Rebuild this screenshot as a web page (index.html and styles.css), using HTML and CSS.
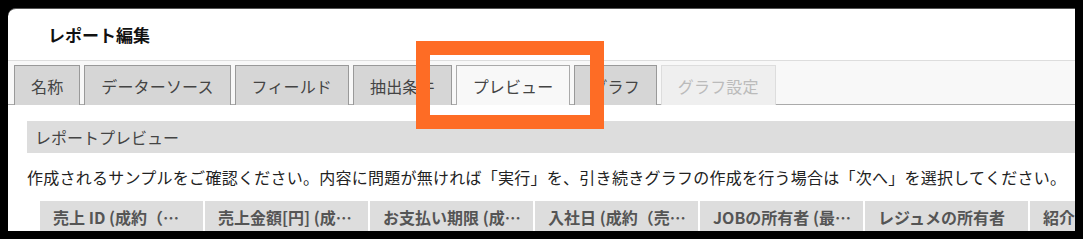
FILE: index.html
```html
<!DOCTYPE html>
<html lang="ja">
<head>
    <meta charset="UTF-8">
    <title>レポート編集</title>
    <link rel="stylesheet" href="styles.css">
</head>
<body>
    <div class="panel">
        <div class="panel-title">レポート編集</div>
        <div class="tab-strip">
            <div class="tab">名称</div>
            <div class="tab">データーソース</div>
            <div class="tab">フィールド</div>
            <div class="tab">抽出条件</div>
            <div class="tab active">プレビュー</div>
            <div class="tab">グラフ</div>
            <div class="tab disabled">グラフ設定</div>
        </div>
        <div class="panel-body">
            <div class="section-head">レポートプレビュー</div>
            <p class="note">作成されるサンプルをご確認ください。内容に問題が無ければ「実行」を、引き続きグラフの作成を行う場合は「次へ」を選択してください。</p>
            <div class="preview-table">
                <div class="th">売上 ID (成約（売上）)</div>
                <div class="th">売上金額[円] (成約（売上）)</div>
                <div class="th">お支払い期限 (成約（売上）)</div>
                <div class="th">入社日 (成約（売上）)</div>
                <div class="th">JOBの所有者 (最終更新)</div>
                <div class="th">レジュメの所有者</div>
                <div class="th">紹介者</div>
            </div>
        </div>
    </div>

    <!-- 注目枠 -->
    <div class="highlight"></div>
</body>
</html>
```

FILE: styles.css
```css
* {
    margin: 0;
    padding: 0;
    box-sizing: border-box;
}

body {
    background: #000;
    font-family: "Noto Sans CJK JP", "Noto Sans", sans-serif;
    width: 1083px;
    height: 239px;
    overflow: hidden;
    position: relative;
    padding: 8px 8px 0 8px;
}

.panel {
    background: #fff;
    border-top-left-radius: 8px;
    height: 223px;
    overflow: hidden;
    border-top: 1px solid #555;
}

.panel-title {
    height: 51px;
    padding-left: 40px;
    font-size: 17px;
    font-weight: bold;
    color: #111;
    display: flex;
    align-items: center;
}

.tab-strip {
    background: #f8f8f8;
    border-top: 1px solid #ddd;
    border-bottom: 1px solid #aaa;
    padding: 4px 0 0 6px;
    display: flex;
    gap: 4px;
    height: 45px;
}

.tab {
    height: 40px;
    margin-bottom: -1px;
    padding: 0 16px;
    background: #d6d6d6;
    border: 1px solid #999;
    border-bottom: none;
    font-size: 16px;
    letter-spacing: 0.15px;
    color: #444;
    display: flex;
    align-items: center;
}

.tab.active {
    background: #f8f8f8;
    border-color: #aaa;
}

.tab.disabled {
    background: #efefef;
    border-color: #ddd;
    color: #bbb;
}

.panel-body {
    padding: 16px 0 0 19px;
}

.section-head {
    background: #ddd;
    height: 32px;
    padding-left: 8px;
    font-size: 16px;
    color: #444;
    display: flex;
    align-items: center;
}

.note {
    font-size: 16px;
    letter-spacing: 0.26px;
    color: #222;
    height: 48px;
    padding-top: 5px;
    line-height: 38px;
    white-space: nowrap;
}

.preview-table {
    margin-left: 13px;
    display: grid;
    grid-template-columns: repeat(7, 163px);
    gap: 2px;
}

.th {
    background: #ddd;
    height: 40px;
    padding: 0 10px 0 13px;
    font-size: 16px;
    font-weight: bold;
    color: #555;
    white-space: nowrap;
    overflow: hidden;
    text-overflow: ellipsis;
    line-height: 32px;
}

.highlight {
    position: absolute;
    left: 416px;
    top: 41px;
    width: 188px;
    height: 88px;
    border: 14px solid #fe6c25;
}
```
